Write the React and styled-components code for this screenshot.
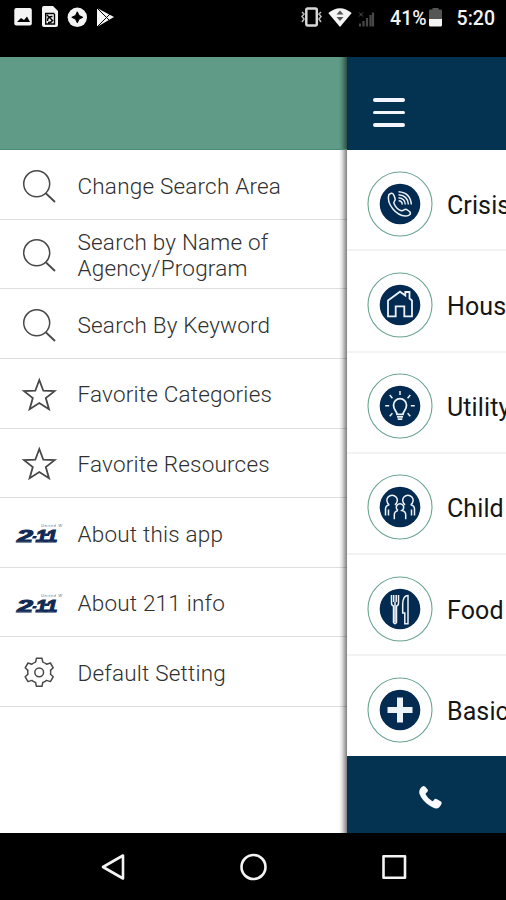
import React from "react";
import styled, { createGlobalStyle } from "styled-components";

const COLOR = {
  NAVY: "#043351",
  BADGE: "#032a50",
  GREEN: "#5f9b86",
  RING: "#6aa58f",
  ICON: "#484848",
  TEXT: "#303030",
};

const GlobalStyle = createGlobalStyle`
  * {
    box-sizing: border-box;
  }

  body {
    margin: 0;
    background-color: black;
    font-family: Roboto, "Liberation Sans", sans-serif;
  }
`;

const Screen = styled.div`
  width: 506px;
  height: 900px;
  display: flex;
  flex-direction: column;
  overflow: hidden;
  background-color: black;
`;

const StatusBar = styled.div`
  height: 57px;
  display: flex;
  justify-content: space-between;
  align-items: flex-start;
  padding: 4px 11px 0 10px;
  color: #f4f4f4;
  font-size: 19.5px;
  font-weight: 500;
  line-height: 30px;

  svg {
    display: block;
  }
`;

const StatusGroup = styled.div`
  display: flex;
  align-items: flex-start;
`;

const Percent = styled.span`
  margin: 0 1px 0 15px;
`;

const Clock = styled.span`
  margin-left: 14px;
`;

const Body = styled.div`
  height: 776px;
  display: flex;
`;

const Drawer = styled.nav`
  flex: none;
  width: 347px;
  background: linear-gradient(to right, transparent 339px, rgba(0, 0, 0, 0.12) 342px, rgba(0, 0, 0, 0.5) 347px),
    linear-gradient(${COLOR.GREEN} 93px, white 93px);
`;

const DrawerHeader = styled.div`
  height: 93px;
  border-bottom: 1px solid #4d8b74;
`;

const DrawerItem = styled.div`
  height: 69.65px;
  display: flex;
  align-items: center;
  padding-top: 3px;
  border-bottom: 1.5px solid rgba(0, 0, 0, 0.13);
`;

const DrawerIcon = styled.span`
  width: 77.5px;
  height: 48px;
  flex: none;

  svg {
    display: block;
  }
`;

const DrawerLabel = styled.span`
  width: 240px;
  color: ${COLOR.TEXT};
  font-size: 22.5px;
  font-weight: 300;
  line-height: 26.5px;
  letter-spacing: 0.2px;
`;

const Content = styled.main`
  flex: 1;
  min-width: 0;
  display: flex;
  flex-direction: column;
  overflow: hidden;
  background-color: white;
`;

const ContentHeader = styled.header`
  height: 93px;
  flex: none;
  display: flex;
  padding: 41px 0 0 26px;
  background-color: ${COLOR.NAVY};
`;

const MenuButton = styled.div`
  width: 32px;
  height: 29px;
  display: flex;
  flex-direction: column;
  justify-content: space-between;
`;

const MenuLine = styled.span`
  height: 3.6px;
  border-radius: 2px;
  background-color: #f3f6ff;
`;

const Category = styled.div`
  height: ${(props) => (props.$last ? "99.5px" : "101.3px")};
  flex: none;
  display: flex;
  align-items: flex-start;
  padding: 20.5px 0 0 20px;
  border-bottom: 2px solid ${(props) => (props.$last ? "white" : "#f3f3f3")};

  svg {
    flex: none;
  }
`;

const CategoryLabel = styled.span`
  margin: 20px 0 0 14px;
  color: #161616;
  font-size: 25px;
  line-height: 30px;
  letter-spacing: 0.1px;
  white-space: nowrap;
`;

const CallBar = styled.footer`
  flex: 1;
  padding: 28px 0 0 70px;
  background-color: ${COLOR.NAVY};
`;

const NavBar = styled.div`
  height: 67px;
  display: flex;
  align-items: center;
  justify-content: space-between;
  padding: 0 98px 0 99px;
`;

function SearchIcon() {
  return (
    <svg width="70" height="48" fill="none" stroke={COLOR.ICON} strokeWidth="1.5">
      <circle cx="36.7" cy="21.8" r="13" />
      <path d="M46 31.5 55 40" strokeWidth="1.8" />
    </svg>
  );
}

function StarIcon() {
  return (
    <svg width="70" height="48" fill="none" stroke={COLOR.ICON} strokeWidth="1.8">
      <path d="M39.3 9 43.3 19.7 54.6 20.1 45.8 27.1 49 38.3 39.3 32 29.6 38.3 32.8 27.1 24 20.1 35.3 19.7Z" />
    </svg>
  );
}

function LogoIcon() {
  return (
    <svg width="70" height="48" fontFamily="Liberation Sans, sans-serif">
      <g fill="#122b55" fontWeight="700" fontStyle="italic" stroke="#122b55" strokeWidth="1">
        <text x="17" y="32" fontSize="17" textLength="16" lengthAdjust="spacingAndGlyphs">2</text>
        <text x="35.5" y="32" fontSize="17" textLength="22" lengthAdjust="spacingAndGlyphs">11</text>
      </g>
      <path d="M33 26h4l-1 2.5h-4zM45 23.5h5l-1 2.5h-5z" fill="#122b55" />
      <path d="M16 32.2h16M38 32.2h5M48 32.2h6" stroke="#7185a0" strokeWidth="0.8" />
      <text x="41" y="17.2" fontSize="4" fontStyle="italic" fill="#60718a" textLength="21">
        United W
      </text>
    </svg>
  );
}

function GearIcon() {
  return (
    <svg width="70" height="48" fill="none" stroke={COLOR.ICON} strokeWidth="1.5" strokeLinejoin="round">
      <g transform="translate(39.2 23.3)">
        <path d="M-2.8-14h5.6l.8 3.8q2 .6 3.8 2.1l3.8-1.2 2.8 4.8-2.7 2.6q.4 1.9 0 3.8l2.7 2.6-2.8 4.8-3.8-1.2q-1.8 1.5-3.8 2.1l-.8 3.8h-5.6l-.8-3.8q-2-.6-3.8-2.1l-3.8 1.2-2.8-4.8 2.7-2.6q-.4-1.9 0-3.8l-2.7-2.6 2.8-4.8 3.8 1.2q1.8-1.5 3.8-2.1z" />
        <circle r="4.4" />
      </g>
    </svg>
  );
}

function CrisisGlyph() {
  return (
    <>
      <path d="M-11.3-9C-9-12-6.8-11-6-8.5L-4.8-5C-4.5-3-7-2.5-6-.5-4.5 3-2 5.8 1.5 6.8 4 7 4.5 4.5 6.5 5.5L9.8 7.7C11.5 10 9 12.3 5.5 12-4 11.5-13.5 0-11.3-9Z" />
      <path d="M-1.5-12.3Q10.5-11.5 11.3 .5M-1.5-9.3Q8-8.5 8.4.5M-1.5-6.3Q5-5.8 5.3.5M-1.3-3.2Q2-3 2.3.5" />
    </>
  );
}

function HouseGlyph() {
  return (
    <path
      d="M-12-4.5 0-13.3 5.3-9.5V-13H9.5V-6.5L12-4.5V11.3H4.3V1.3H-4.3V11.3H-12Z"
      strokeWidth="1.8"
    />
  );
}

function BulbGlyph() {
  return (
    <>
      <path d="M-3 8.3C-3 5.5-6.5 4-6.5-.8A6.5 6.5 0 0 1 6.5-.8C6.5 4 3 5.5 3 8.3Z" strokeWidth="1.8" />
      <path d="M-3 10.8h6M-2.3 13.2h4.6" strokeWidth="1.8" />
      <path d="M0-15v4M-14.8-.3h4M10.8-.3h4M-10.3-11l2.7 3.2M10.3-11 7.6-7.8M-10.3 10.2l2.7-3M10.3 10.2l-2.7-3" />
    </>
  );
}

function FamilyGlyph() {
  return (
    <>
      <path d="M-10.7-2.2A5.2 5.2 0 1 1-5.1-2.2M-10.7-2.2Q-14.5-1.3-14.5 2V8.5M-11.5 2.5V8.5M5.1-2.2A5.2 5.2 0 1 1 10.7-2.2M10.7-2.2Q14.5-1.3 14.5 2V8.5M11.5 2.5V8.5" />
      <path d="M-2 3.5A3.7 3.7 0 1 1 2 3.5Q5.7 4.2 5.7 8V12.3M-2 3.5Q-5.7 4.2-5.7 8V12.3" />
    </>
  );
}

function FoodGlyph() {
  return (
    <>
      <path d="M-8.5-14V-6Q-8.5-3.5-6.5-3V13.3Q-5 16-3.5 13.3V-3Q-1.5-3.5-1.5-6V-14M-6.3-14V-7M-3.8-14V-7" />
      <path d="M-5-7V13.5" />
      <path d="M8-13.5V14.7H4.8V4H2.7V-5Q3-13.5 8-13.5Z" />
    </>
  );
}

function PlusGlyph() {
  return <path d="M0-12.5V12.5M-12.5 0H12.5" strokeWidth="6" />;
}

function Badge({ children }) {
  return (
    <svg width="66" height="66" viewBox="-33 -33 66 66">
      <circle r="32" fill="white" stroke={COLOR.RING} strokeWidth="1.1" />
      <circle r="20.3" fill={COLOR.BADGE} />
      <g fill="none" stroke="#edf1f8" strokeWidth="1.5">
        {children}
      </g>
    </svg>
  );
}

const DRAWER_ITEMS = [
  { label: "Change Search Area", Icon: SearchIcon },
  { label: "Search by Name of Agency/Program", Icon: SearchIcon },
  { label: "Search By Keyword", Icon: SearchIcon },
  { label: "Favorite Categories", Icon: StarIcon },
  { label: "Favorite Resources", Icon: StarIcon },
  { label: "About this app", Icon: LogoIcon },
  { label: "About 211 info", Icon: LogoIcon },
  { label: "Default Setting", Icon: GearIcon },
];

const CATEGORIES = [
  { label: "Crisis", Glyph: CrisisGlyph },
  { label: "Housing", Glyph: HouseGlyph },
  { label: "Utility", Glyph: BulbGlyph },
  { label: "Child", Glyph: FamilyGlyph },
  { label: "Food", Glyph: FoodGlyph },
  { label: "Basic", Glyph: PlusGlyph },
];

function NotificationIcons() {
  return (
    <svg width="110" height="28" fill="#f4f4f4">
      <rect x="4.3" y="4" width="17.5" height="17.5" rx="2" />
      <path d="m7 18 4-4 3 2 3-3.5 3 5.5z" fill="black" />
      <path d="M34 2h9l5 5v14q0 2-2 2H34q-2 0-2-2V4q0-2 2-2z" />
      <path d="M44.5 10V20H35.7V9.5H44.5M37.5 17q0-5 5-4.5M43 16q-2 3-5 2.500M37 11l6 6" fill="none" stroke="black" strokeWidth="1.4" />
      <circle cx="67.3" cy="13.3" r="9.7" />
      <path d="m67.3 7.8 1.8 3.7 3.7 1.8-3.7 1.8-1.8 3.7-1.8-3.7-3.7-1.8 3.7-1.8z" fill="black" stroke="black" />
      <path d="M87 4 104 13 87 23z" />
      <path d="m87 4 13 13M87 23 100 10" stroke="black" strokeWidth="1" />
    </svg>
  );
}

function SignalIcons() {
  return (
    <svg width="82" height="28" fill="none" stroke="#f4f4f4">
      <rect x="13.3" y="4.5" width="10.5" height="17" rx="1.5" strokeWidth="2.5" stroke="#d8d8d8" />
      <path d="m9 8 2 2-2 2.5 2 2.5-2 3M28 8l-2 2 2 2.5-2 2.5 2 3" stroke="#bdbdbd" strokeWidth="1.5" />
      <path d="M35.3 9Q47-.5 58.7 9L47 23z" fill="#f4f4f4" stroke="none" />
      <path d="m43.5 10.5 3.5-4 3.5 4zM43.5 13h7l-3.5 4z" fill="#555" stroke="none" />
      <path d="M66 8.5l4 4M70 8.5l-4 4" stroke="#555" />
      <path d="M67 19.5v3M70.5 17v5.5M74 14v8.5M77.5 11v11.5M80 8.5v14" stroke="#484848" strokeWidth="2.2" />
    </svg>
  );
}

function BatteryIcon() {
  return (
    <svg width="15" height="28">
      <path d="M1 6.5Q1 5.5 2 5.5h2.5V4h6v1.5H13q1 0 1 1V15H1z" fill="#555" />
      <path d="M1 15h13v6q0 1.5-1.5 1.5h-10Q1 22.5 1 21z" fill="#f4f4f4" />
    </svg>
  );
}

function App() {
  return (
    <>
      <GlobalStyle />
      <Screen>
        <StatusBar>
          <NotificationIcons />
          <StatusGroup>
            <SignalIcons />
            <Percent>41%</Percent>
            <BatteryIcon />
            <Clock>5:20</Clock>
          </StatusGroup>
        </StatusBar>
        <Body>
          <Drawer>
            <DrawerHeader />
            {DRAWER_ITEMS.map(({ label, Icon }) => (
              <DrawerItem key={label}>
                <DrawerIcon>
                  <Icon />
                </DrawerIcon>
                <DrawerLabel>{label}</DrawerLabel>
              </DrawerItem>
            ))}
          </Drawer>
          <Content>
            <ContentHeader>
              <MenuButton>
                <MenuLine />
                <MenuLine />
                <MenuLine />
              </MenuButton>
            </ContentHeader>
            {CATEGORIES.map(({ label, Glyph }, index) => (
              <Category key={label} $last={index === CATEGORIES.length - 1}>
                <Badge>
                  <Glyph />
                </Badge>
                <CategoryLabel>{label}</CategoryLabel>
              </Category>
            ))}
            <CallBar>
              <svg width="27" height="27" viewBox="0 0 27 27" fill="#f8faff">
                <path d="M3 5Q5.5 .8 8 2.500L10.7 5.5Q11.500 7 10 8.3 8 9.5 8.700 10.6 11 15 15 17 16.1 17.5 16.9 16.1 17.8 14.3 19.5 14.9L24 17.6Q26 19.5 22.3 23.2 19 26.3 12 21.3 5 16.5 2.3 9.5 1.8 7 3 5Z" />
              </svg>
            </CallBar>
          </Content>
        </Body>
        <NavBar>
          <svg width="28" height="30" fill="none" stroke="#f4f4f4" strokeWidth="2.6" strokeLinejoin="round">
            <path d="M24 3.5V26.5L4 15z" />
          </svg>
          <svg width="30" height="30" fill="none" stroke="#f4f4f4" strokeWidth="2.6">
            <circle cx="14.5" cy="15" r="12" />
          </svg>
          <svg width="28" height="30" fill="none" stroke="#f4f4f4" strokeWidth="2.6" strokeLinejoin="round">
            <rect x="3.5" y="4.3" width="21.5" height="21.5" />
          </svg>
        </NavBar>
      </Screen>
    </>
  );
}

export default App;
